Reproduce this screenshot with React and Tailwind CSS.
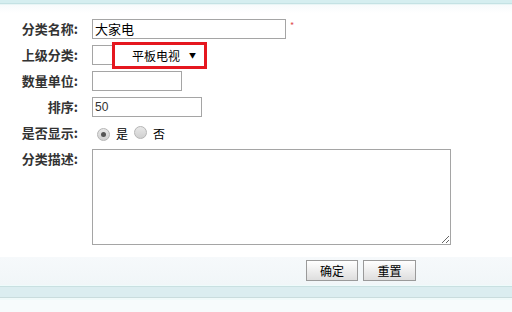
import React from "react";

const font = { fontFamily: '"Noto Sans CJK SC", "Liberation Sans", sans-serif' };

function Label({ children }) {
  return (
    <div className="w-[78px] shrink-0 text-right text-[13px] font-bold text-[#333] leading-[20px]">
      {children}
    </div>
  );
}

function Row({ children, className = "" }) {
  return <div className={`flex items-start gap-[14px] ${className}`}>{children}</div>;
}

function Radio({ checked }) {
  return (
    <span className="inline-flex h-[13px] w-[13px] items-center justify-center rounded-full border border-[#b5b5b5] bg-gradient-to-b from-[#e8e8e8] to-[#d0d0d0]">
      {checked && <span className="h-[5px] w-[5px] rounded-full bg-[#555]" />}
    </span>
  );
}

export default function App() {
  return (
    <div className="h-[312px] w-[512px] overflow-hidden bg-white" style={font}>
      <div className="h-[3px] bg-[#d5eef0]" />
      <div className="h-[1px] bg-[#c4e2e4]" />
      <div className="h-[1px] bg-[#e9f5f6]" />
      <div className="h-[8px] bg-gradient-to-b from-[#f7fbfc] to-white" />

      <div className="flex flex-col gap-[6px] pt-[6px]">
        <Row>
          <Label>分类名称:</Label>
          <div className="flex items-start">
            <div className="h-[20px] w-[194px] border border-[#a5a5a5] bg-white px-[2px] text-[13px] leading-[18px] text-black">
              大家电
            </div>
            <span className="ml-[4px] text-[9px] leading-[14px] text-[#e05050]">*</span>
          </div>
        </Row>
        <Row>
          <Label>上级分类:</Label>
          <div className="relative h-[20px] w-[114px] border border-[#a5a5a5] bg-white">
            <div className="absolute left-[19px] top-[-4px] flex h-[27px] w-[95px] items-center border-[3px] border-[#e5171f] bg-white pl-[17px] text-[12px] text-black">
              <span>平板电视</span>
              <span className="ml-[9px] text-[7px]">▼</span>
            </div>
          </div>
        </Row>
        <Row>
          <Label>数量单位:</Label>
          <div className="h-[20px] w-[90px] border border-[#a5a5a5] bg-white" />
        </Row>
        <Row>
          <Label>排序:</Label>
          <div className="h-[20px] w-[110px] border border-[#a5a5a5] bg-white px-[2px] text-[12px] leading-[18px] text-[#333]" style={{ fontFamily: '"Liberation Sans", sans-serif' }}>
            50
          </div>
        </Row>
        <Row>
          <Label>是否显示:</Label>
          <div className="flex h-[20px] items-center pl-[5px] pt-[2px] text-[12px] text-black">
            <Radio checked />
            <span className="ml-[6px]">是</span>
            <span className="ml-[6px]"><Radio /></span>
            <span className="ml-[6px]">否</span>
          </div>
        </Row>
        <Row>
          <Label>分类描述:</Label>
          <textarea className="h-[96px] w-[359px] border border-[#a5a5a5] bg-white outline-none" />
        </Row>
      </div>

      <div className="h-[12px]" />
      <div className="flex h-[28px] items-start justify-start gap-[5px] bg-gradient-to-b from-[#f6f9fb] to-[#f1f6f8] pl-[306px] pt-[3px]">
        <button className="h-[21px] w-[52px] border border-[#9a9a9a] bg-gradient-to-b from-white to-[#dedede] text-[12px] text-black">
          确定
        </button>
        <button className="h-[21px] w-[53px] border border-[#9a9a9a] bg-gradient-to-b from-white to-[#dedede] text-[12px] text-black">
          重置
        </button>
      </div>
      <div className="h-[1px] bg-[#eefbfb]" />
      <div className="h-[1px] bg-[#c9e0e1]" />
      <div className="h-[10px] bg-[#dbedf0]" />
      <div className="h-[1px] bg-[#c9dcdd]" />
      <div className="h-[2px] bg-[#f0fafa]" />
      <div className="h-[15px] bg-[#f7fbfc]" />
    </div>
  );
}
